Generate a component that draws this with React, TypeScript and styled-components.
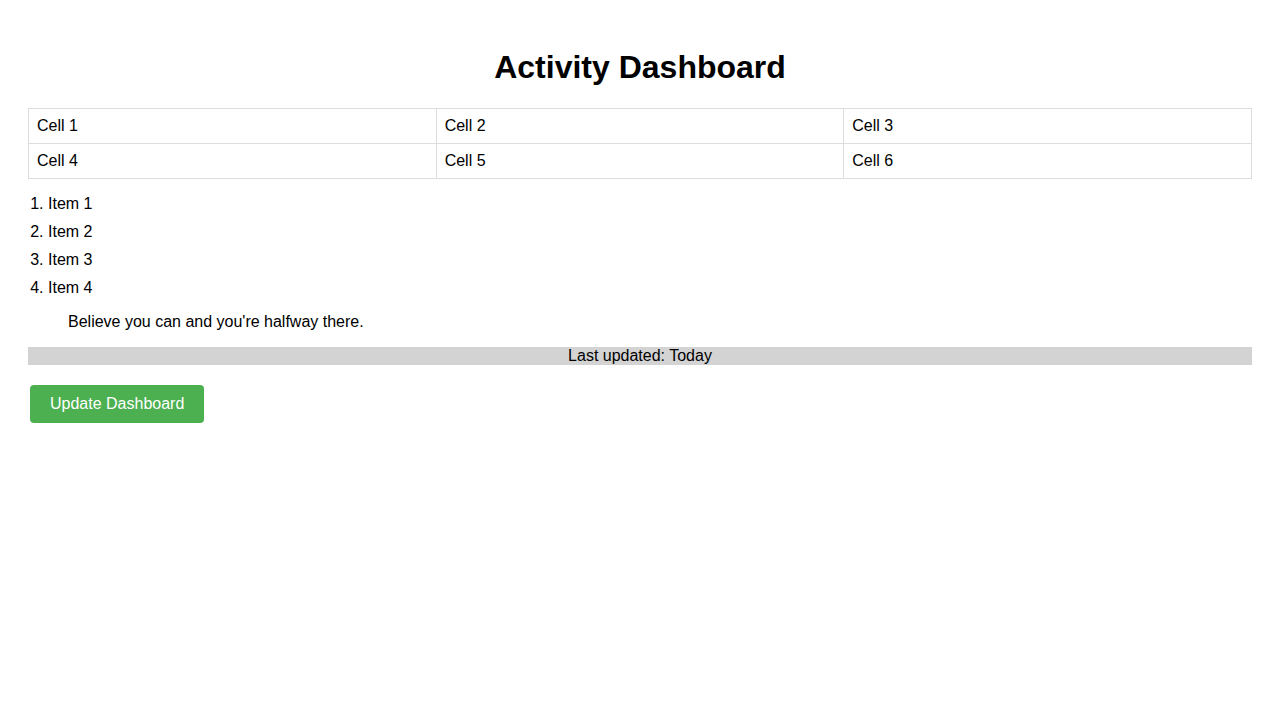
import React from "react";
import styled, { createGlobalStyle } from "styled-components";

const Global = createGlobalStyle`
  body {
    margin: 8px;
    font-family: "Liberation Sans", Arial, sans-serif;
    font-size: 16px;
    color: #000;
    background: #fff;
  }
`;

const Container = styled.div`
  padding: 20px;
`;

const Title = styled.h1`
  text-align: center;
  font-size: 32px;
  font-weight: bold;
  margin: 21.44px 0;
`;

const Table = styled.table`
  width: 100%;
  border-collapse: collapse;
  table-layout: fixed;
`;

const Cell = styled.td`
  border: 1px solid #ddd;
  padding: 8px;
  text-align: left;
`;

const List = styled.ol`
  margin: 16px 0;
  padding-left: 20px;
`;

const Item = styled.li`
  margin-bottom: 10px;
`;

const Quote = styled.blockquote`
  margin: 16px 40px;
`;

const Footer = styled.div`
  background: #d3d3d3;
  text-align: center;
`;

const Button = styled.button`
  margin: 20px 2px 0;
  padding: 10px 20px;
  background: #4caf50;
  color: #fff;
  border: none;
  border-radius: 4px;
  font-family: "Liberation Sans", Arial, sans-serif;
  font-size: 16px;
  cursor: pointer;
`;

const rows = [
  ["Cell 1", "Cell 2", "Cell 3"],
  ["Cell 4", "Cell 5", "Cell 6"],
];

export default function App() {
  return (
    <>
      <Global />
      <Container>
        <Title>Activity Dashboard</Title>
        <Table>
          <tbody>
            {rows.map((r, i) => (
              <tr key={i}>
                {r.map((c) => (
                  <Cell key={c}>{c}</Cell>
                ))}
              </tr>
            ))}
          </tbody>
        </Table>
        <List>
          {["Item 1", "Item 2", "Item 3", "Item 4"].map((t) => (
            <Item key={t}>{t}</Item>
          ))}
        </List>
        <Quote>Believe you can and you're halfway there.</Quote>
        <Footer>Last updated: Today</Footer>
        <Button>Update Dashboard</Button>
      </Container>
    </>
  );
}
